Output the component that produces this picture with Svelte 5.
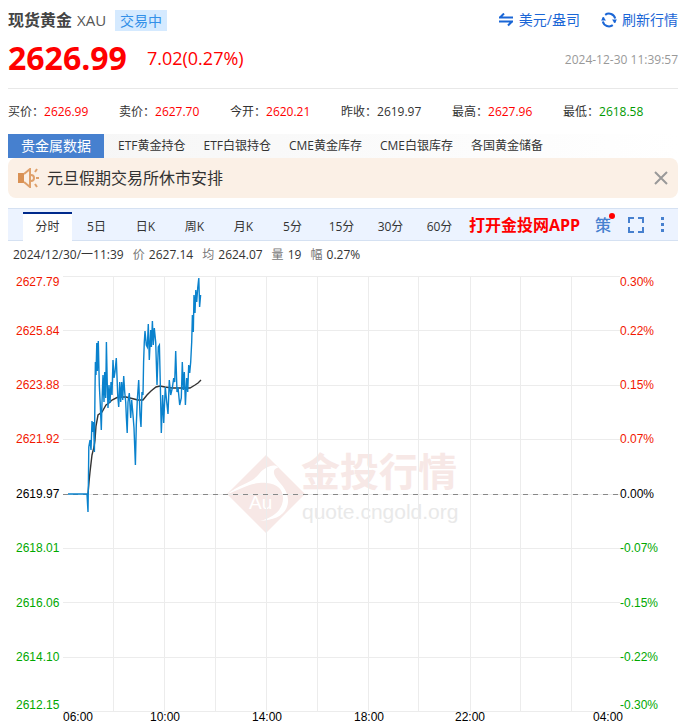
<script lang="ts">
  type Tone = "up" | "down" | "flat";

  const quotes: { label: string; value: string; tone: Tone }[] = [
    { label: "买价", value: "2626.99", tone: "up" },
    { label: "卖价", value: "2627.70", tone: "up" },
    { label: "今开", value: "2620.21", tone: "up" },
    { label: "昨收", value: "2619.97", tone: "flat" },
    { label: "最高", value: "2627.96", tone: "up" },
    { label: "最低", value: "2618.58", tone: "down" },
  ];

  const links = ["ETF黄金持仓", "ETF白银持仓", "CME黄金库存", "CME白银库存", "各国黄金储备"];
  const periods = ["分时", "5日", "日K", "周K", "月K", "5分", "15分", "30分", "60分"];

  const readout = [
    { label: "价", value: "2627.14" },
    { label: "均", value: "2624.07" },
    { label: "量", value: "19" },
    { label: "幅", value: "0.27%" },
  ];

  let period = $state("分时");
  let showNotice = $state(true);

  const rows: { y: number; text: number; price: string; pct: string; tone: Tone }[] = [
    { y: 8, text: 18, price: "2627.79", pct: "0.30%", tone: "up" },
    { y: 62, text: 67, price: "2625.84", pct: "0.22%", tone: "up" },
    { y: 117, text: 121, price: "2623.88", pct: "0.15%", tone: "up" },
    { y: 171, text: 175, price: "2621.92", pct: "0.07%", tone: "up" },
    { y: 226, text: 230, price: "2619.97", pct: "0.00%", tone: "flat" },
    { y: 280, text: 284, price: "2618.01", pct: "-0.07%", tone: "down" },
    { y: 334, text: 339, price: "2616.06", pct: "-0.15%", tone: "down" },
    { y: 389, text: 393, price: "2614.10", pct: "-0.22%", tone: "down" },
    { y: 443, text: 441, price: "2612.15", pct: "-0.30%", tone: "down" },
  ];

  const columns = [113, 164, 215, 266, 317, 368, 418, 470, 520, 571];

  const times = [
    { x: 78, label: "06:00" },
    { x: 165, label: "10:00" },
    { x: 267, label: "14:00" },
    { x: 369, label: "18:00" },
    { x: 470, label: "22:00" },
    { x: 608, label: "04:00" },
  ];

  const priceLine = `68,226 87,226 88,244 88.4,215 88.8,179 90,172 91,182 92,153 92.8,164 93.6,154
    94.4,184 95,122 95.4,94 96,107 96.8,75 97.4,103 98.3,73 99.3,117 100.3,137 101.3,162 102,134
    103,107 104,134 104.7,104 105.7,130 106.4,74 107.3,117 108,140 109,117 110,135 111,114
    112,127 113,92 114,110 115,104 116.3,90 117.7,127 118.7,139 119.7,114 120.7,134 121.7,114
    122.7,132 123.7,108 124.7,124 125.7,134 126.4,150 127.2,165 128,134 129.3,125 130.7,150
    131.7,132 133,147 134,160 135.4,197 136.3,157 137.3,132 138.7,112 140,147 141,159 142,124
    143,127 143.6,94 144.3,74 145,63 146.3,77 147.3,79 148.3,56 149.3,92 150.7,62 151.4,79
    152.4,53 153.3,77 154.3,60 155.7,74 157,117 158.3,79 159.4,77 160.4,120 161.3,165 162.7,127
    163.7,155 165.3,119 166.7,134 168,146 169.3,112 170.7,127 172.3,120 173.7,110 174.7,114
    175.7,83 177,124 178,119 179.7,137 181.3,130 182.3,94 183.3,122 184.3,104 185.4,137
    186.7,110 187.7,124 188.7,97 189.7,105 190.7,94 191.7,74 192.4,47 193.3,64 194,27 195,45
    195.8,22 196.7,34 197.7,20 198.8,10 199.6,39 200.6,27`;

  const averageLine = `88,226 89,214 90,204 92,187 94,179 95,172 96,158 98,147 102,144 106,137
    109,135 112,132 118,129 126,129 134,131 138,132 143,132 147,127 151,123 156,119 160,118
    165,119 172,120 190,120 195,117 198,115 201,112`;
</script>

<div class="page">
  <header class="head">
    <div class="line">
      <h1>现货黄金</h1>
      <span class="code">XAU</span>
      <span class="badge">交易中</span>
      <div class="actions">
        <button type="button">
          <svg width="16" height="14" viewBox="0 0 16 14" aria-hidden="true">
            <path d="M1 4.5h14M6 .5L2 4.5M1 8.5h14M10 12.5l4-4" />
          </svg>
          美元/盎司
        </button>
        <button type="button">
          <svg width="16" height="16" viewBox="0 0 16 16" aria-hidden="true">
            <path d="M4.2 2.9A6.4 6.4 0 0 1 14.2 6.5M11.8 13.1A6.4 6.4 0 0 1 1.8 9.5" />
            <path d="M2 8a6 6 0 0 1 .6-2.6M14 8a6 6 0 0 1-.6 2.6" />
            <path class="solid" d="M0 8.5L2.4 5 5 8.5zM16 7.5L13.6 11 11 7.5z" />
          </svg>
          刷新行情
        </button>
      </div>
    </div>
    <div class="line price-line">
      <strong class="price">2626.99</strong>
      <span class="change">7.02(0.27%)</span>
      <time>2024-12-30 11:39:57</time>
    </div>
  </header>

  <dl class="quotes">
    {#each quotes as q}
      <div>
        <dt>{q.label}：</dt>
        <dd class={q.tone}>{q.value}</dd>
      </div>
    {/each}
  </dl>

  <nav class="links">
    <a class="current" href="#metals">贵金属数据</a>
    {#each links as link}
      <a href="#data">{link}</a>
    {/each}
  </nav>

  {#if showNotice}
    <div class="notice">
      <svg width="22" height="20" viewBox="0 0 22 20" aria-hidden="true">
        <path class="horn" d="M0 5h6v10H0z" />
        <path class="cone" d="M6 6l6-5v18l-6-5" />
        <path class="wave" d="M13 7a3 3 0 0 1 0 6M18 10h3M17 4l2-3M17 16l2 3" />
      </svg>
      <a href="#notice">元旦假期交易所休市安排</a>
      <button type="button" aria-label="关闭" onclick={() => (showNotice = false)}>
        <svg width="14" height="14" viewBox="0 0 14 14"><path d="M1 1l12 12M13 1L1 13" /></svg>
      </button>
    </div>
  {/if}

  <div class="toolbar">
    <div class="periods">
      {#each periods as p}
        <button type="button" class:active={period === p} onclick={() => (period = p)}>{p}</button>
      {/each}
    </div>
    <a class="app" href="#app">打开金投网APP</a>
    <div class="tools">
      <button type="button" class="strategy">策<span class="dot"></span></button>
      <button type="button" aria-label="全屏">
        <svg width="16" height="16" viewBox="0 0 16 16">
          <path d="M1 6V1h5M10 1h5v5M15 10v5h-5M6 15H1v-5" />
        </svg>
      </button>
      <button type="button" aria-label="更多">
        <svg class="more" width="3" height="16" viewBox="0 0 3 16">
          <path d="M0 0h3v3H0zM0 6h3v3H0zM0 12h3v3H0z" />
        </svg>
      </button>
    </div>
  </div>

  <div class="readout">
    <span>2024/12/30/一11:39</span>
    {#each readout as r}
      <span><i>{r.label}</i> {r.value}</span>
    {/each}
  </div>
</div>

<svg class="chart" viewBox="0 0 687 456" role="img" aria-label="现货黄金分时图">
  <g class="watermark">
    <path class="diamond" d="M266 187L305 226 266 265 227 226z" />
    <path
      class="swoosh"
      d="M227 226C240 216 252 215 259 206C264 199 274 195 278 199C279 200 273 200 274 205C275 213 289 219 288 234C287 247 275 252 260 253C275 249 283 241 283 230C283 217 270 214 259 215C247 216 237 223 227 226z"
    />
    <text class="au" x="249" y="241">Au</text>
    <text class="brand" x="301" y="218">金投行情</text>
    <text class="site" x="302" y="251">quote.cngold.org</text>
  </g>

  <g class="grid">
    {#each rows as row}
      <path d="M63 {row.y + 0.5}H620" />
    {/each}
    {#each columns as x}
      <path d="M{x + 0.5} 8V443" />
    {/each}
  </g>

  <path class="base" d="M63 226.5H620" />
  <polyline class="average" points={averageLine} />
  <polyline class="trend" points={priceLine} />

  {#each rows as row}
    <text class={row.tone} x="16" y={row.text}>{row.price}</text>
    <text class={row.tone} x="620" y={row.text}>{row.pct}</text>
  {/each}
  {#each times as t}
    <text class="time" x={t.x} y="453">{t.label}</text>
  {/each}
</svg>

<style>
  :global(body) {
    background: #fff;
    color: #333;
    font: 12px/16px "Open Sans", "Noto Sans CJK SC", sans-serif;
  }
  .page {
    padding: 0 9px 0 8px;
  }
  button {
    padding: 0;
    border: 0;
    background: none;
    color: inherit;
    font: inherit;
    cursor: pointer;
  }
  a {
    color: inherit;
    text-decoration: none;
  }
  svg {
    display: block;
    fill: none;
  }
  .head {
    padding: 10px 0 2px;
    border-bottom: 1px solid #e8e8e8;
  }
  .line {
    display: flex;
    align-items: center;
    height: 20px;
  }
  h1 {
    margin: 0;
    color: #444;
    font-size: 16px;
  }
  .code {
    margin-left: 5px;
    color: #555;
    font-size: 15px;
  }
  .badge {
    margin-left: 9px;
    padding: 0 5px;
    background: #d5eaff;
    color: #3390e8;
    font-size: 14px;
    line-height: 21px;
  }
  .actions {
    display: flex;
    gap: 21px;
    margin-left: auto;
    color: #1a66d6;
    font-size: 14px;
  }
  .actions button {
    display: flex;
    align-items: center;
    gap: 5px;
  }
  .actions path {
    stroke: #1a66d6;
    stroke-width: 2;
  }
  .actions .solid {
    fill: #1a66d6;
    stroke: none;
  }
  .price-line {
    height: 56px;
  }
  .price {
    color: #f00;
    font-size: 32px;
    line-height: 56px;
  }
  .change {
    margin-left: 20px;
    color: #f00;
    font-size: 18px;
  }
  time {
    margin: 4px 0 0 auto;
    color: #999;
  }
  .quotes {
    display: grid;
    grid-template-columns: repeat(6, 1fr);
    margin: 0;
    padding: 15px 4px 14px 0;
  }
  .quotes div {
    display: flex;
  }
  .quotes dd {
    margin: 0;
  }
  .up {
    color: #f00;
    fill: #f21800;
  }
  .down {
    color: #090;
    fill: #00a800;
  }
  .flat {
    fill: #000;
  }
  .links {
    display: flex;
    align-items: center;
    gap: 18px;
    background: linear-gradient(90deg, #f5f5f5, #fff);
    line-height: 24px;
    white-space: nowrap;
  }
  .links .current {
    margin-right: -4px;
    padding: 0 13px;
    background: #4680cf;
    color: #fff;
    font-size: 14px;
  }
  .notice {
    display: flex;
    align-items: center;
    height: 40px;
    padding: 0 10px;
    border-radius: 8px;
    background: #fbf0e6;
    font-size: 16px;
  }
  .notice a {
    flex: 1;
    margin-left: 7px;
  }
  .notice button path {
    stroke: #999;
    stroke-width: 2;
  }
  .horn {
    fill: #d99154;
  }
  .cone,
  .wave {
    stroke: #dfa06a;
    stroke-width: 2;
  }
  .toolbar {
    display: flex;
    align-items: center;
    height: 31px;
    margin-top: 10px;
    padding: 0 14px 0 15px;
    border: solid #d5e1f2;
    border-width: 1px 0;
    background: #ecf3ff;
  }
  .periods {
    display: flex;
    align-self: stretch;
    padding-top: 3px;
  }
  .periods button {
    width: 49px;
    border-top: 2px solid transparent;
  }
  .periods .active {
    border-top-color: #002a8c;
    background: #fff;
    box-shadow: 0 1px #fff;
  }
  .app {
    margin-left: 5px;
    color: #f00;
    font-size: 16px;
    font-weight: 700;
    white-space: nowrap;
  }
  .tools {
    display: flex;
    align-items: center;
    gap: 17px;
    margin-left: auto;
    color: #4680cf;
  }
  .tools path {
    stroke: #4680cf;
    stroke-width: 2;
  }
  .tools .more path {
    fill: #4680cf;
    stroke: none;
  }
  .strategy {
    position: relative;
    font-size: 16px;
    font-weight: 500;
  }
  .dot {
    position: absolute;
    top: -4px;
    right: -4px;
    width: 6px;
    height: 6px;
    border-radius: 50%;
    background: #f00;
  }
  .readout {
    display: flex;
    gap: 9px;
    padding: 6px 5px 5px;
  }
  .readout i {
    margin-right: 1px;
    color: #777;
    font-style: normal;
  }
  .chart {
    width: 100%;
    font: 12px "Liberation Sans", sans-serif;
  }
  .grid path {
    stroke: #ececec;
  }
  .base {
    stroke: #888;
    stroke-dasharray: 5 5;
  }
  .trend {
    stroke: #0a82cd;
    stroke-width: 1.4;
  }
  .average {
    stroke: #333;
    stroke-width: 1.4;
  }
  .time {
    fill: #000;
    text-anchor: middle;
  }
  .diamond,
  .brand {
    fill: #f7e8e6;
  }
  .swoosh,
  .au {
    fill: #fff;
  }
  .au {
    font-size: 19px;
  }
  .brand {
    font: 700 39px "Noto Sans CJK SC", sans-serif;
  }
  .site {
    fill: #e9e9e9;
    font-size: 21px;
  }
</style>
